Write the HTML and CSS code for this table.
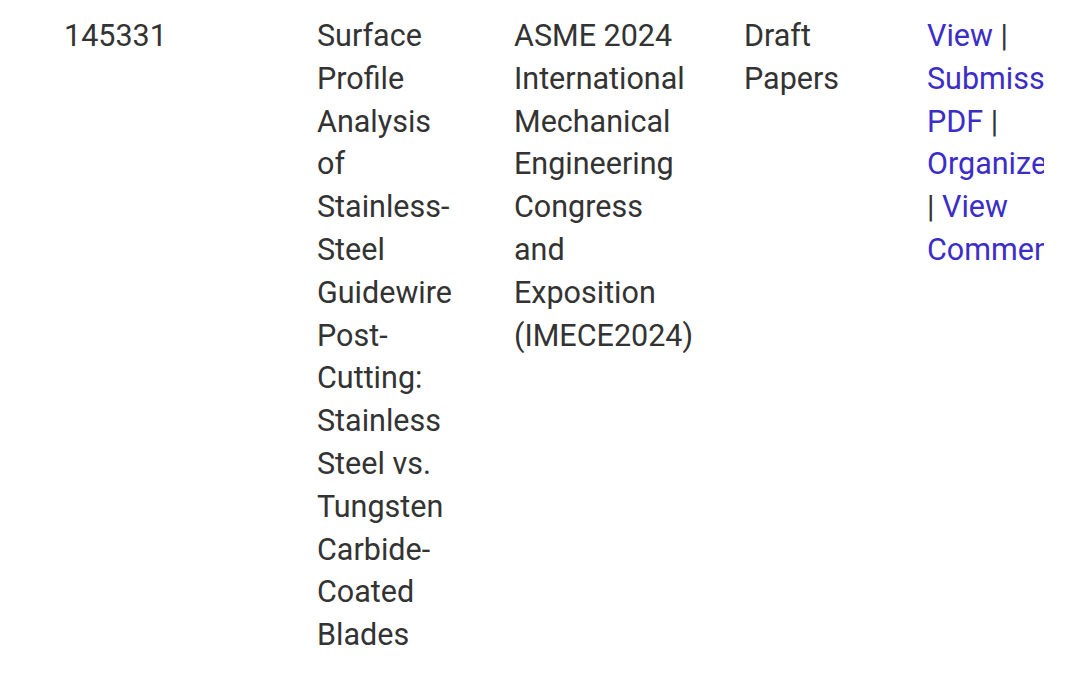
FILE: index.html
```html
<!DOCTYPE html>
<html lang="en">
<head>
<meta charset="utf-8">
<title>Papers</title>
<link rel="stylesheet" href="styles.css">
</head>
<body>
<div class="scroller">
  <table class="papers">
    <colgroup>
      <col class="c-id">
      <col class="c-title">
      <col class="c-conf">
      <col class="c-status">
      <col class="c-actions">
    </colgroup>
    <tbody>
      <tr>
        <td class="cell id">145331</td>
        <td class="cell title">Surface Profile Analysis of Stainless-Steel Guidewire Post-Cutting: Stainless Steel vs. Tungsten Carbide-Coated Blades</td>
        <td class="cell conf">ASME 2024 International Mechanical Engineering Congress and Exposition (IMECE2024)</td>
        <td class="cell status">Draft Papers</td>
        <td class="cell actions"><a href="#">View</a> | <a href="#">Submission PDF</a> | <a href="#">Organizer</a> | <a href="#">View Comments</a></td>
      </tr>
    </tbody>
  </table>
</div>
</body>
</html>
```

FILE: styles.css
```css
html, body {
  margin: 0;
  padding: 0;
  background: #ffffff;
}

body {
  font-family: Roboto, "Liberation Sans", Arial, sans-serif;
  font-size: 30.5px;
  line-height: 42.8px;
  color: #333333;
}

.scroller {
  width: 1044px;
  overflow: hidden;
  padding-top: 15px;
}

.papers {
  border-collapse: collapse;
  table-layout: fixed;
  width: 1080px;
  margin-left: 64px;
}

.c-id { width: 253px; }
.c-title { width: 197px; }
.c-conf { width: 230px; }
.c-status { width: 183px; }
.c-actions { width: 217px; }

.cell {
  vertical-align: top;
  padding: 0;
  text-align: left;
}

.title { padding-right: 55px; }
.conf { padding-right: 46px; }
.status { padding-right: 30px; }
.actions { padding-right: 77px; }

.actions a {
  color: #3b2ec8;
  text-decoration: none;
}
```
